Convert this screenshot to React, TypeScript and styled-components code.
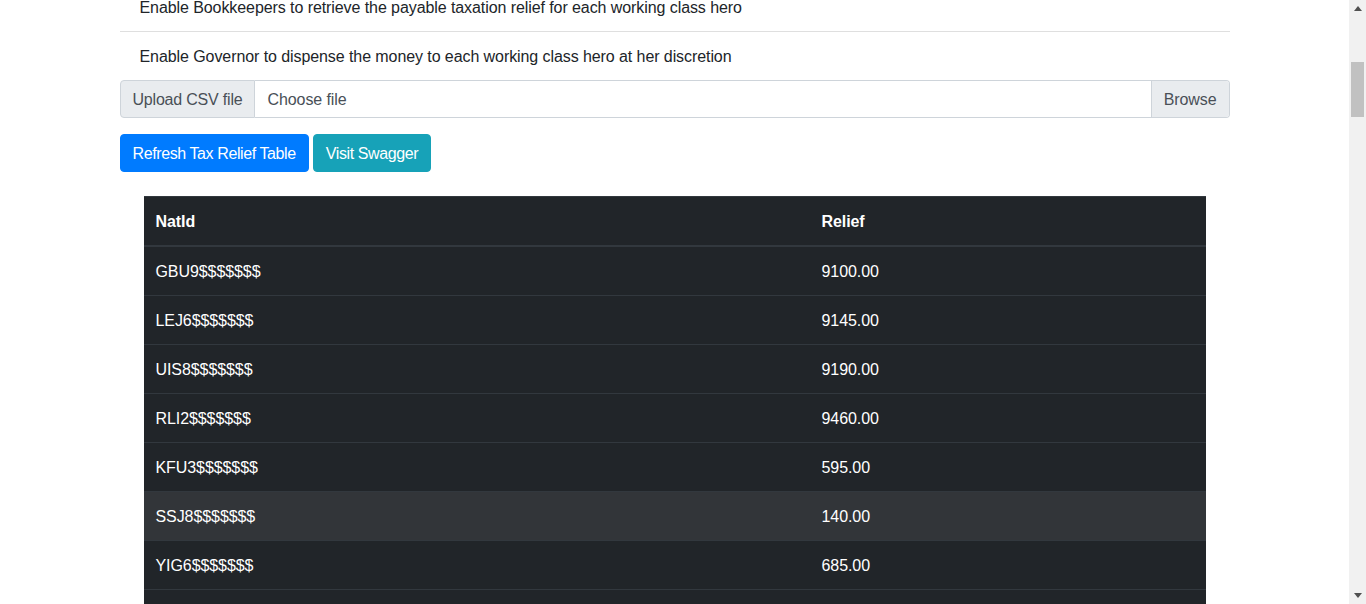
import React from "react";
import styled, { createGlobalStyle } from "styled-components";

const Global = createGlobalStyle`
  html, body { margin: 0; padding: 0; background: #fff; }
  body {
    font-family: "Liberation Sans", Arial, sans-serif;
    font-size: 16px;
    line-height: 1.5;
    letter-spacing: -0.08px;
    color: #212529;
  }
  * { box-sizing: border-box; }
`;

const Viewport = styled.div`
  display: flex;
  width: 1366px;
  height: 604px;
  overflow: hidden;
`;

const Main = styled.main`
  flex: 1;
  overflow: hidden;
`;

const Container = styled.div`
  width: 1110px;
  margin: -17px auto 0;
`;

const ListGroup = styled.ul`
  list-style: none;
  margin: 0;
  padding: 0;
`;

const ListItem = styled.li`
  padding: 13px 20px 11px;
  border-bottom: 1px solid rgba(0, 0, 0, 0.125);
  &:last-child { border-bottom: 0; }
`;

const InputGroup = styled.div`
  display: flex;
  height: 38px;
`;

const Prepend = styled.span`
  display: flex;
  align-items: center;
  padding: 2px 12px 0;
  background: #e9ecef;
  border: 1px solid #ced4da;
  border-radius: 4px 0 0 4px;
  color: #495057;
  white-space: nowrap;
  letter-spacing: -0.2px;
`;

const FileLabel = styled.label`
  flex: 1;
  display: flex;
  align-items: center;
  border: 1px solid #ced4da;
  border-left: 0;
  border-radius: 0 4px 4px 0;
  color: #495057;
  overflow: hidden;
`;

const FileText = styled.span`
  flex: 1;
  padding: 2px 12px 0;
`;

const BrowseBtn = styled.span`
  align-self: stretch;
  display: flex;
  align-items: center;
  padding: 2px 12px 0;
  background: #e9ecef;
  border-left: 1px solid #ced4da;
`;

const ButtonRow = styled.div`
  display: flex;
  gap: 4px;
  margin-top: 16px;
`;

const Button = styled.button<{ $variant: "primary" | "info" }>`
  height: 38px;
  padding: 2px 12px 0;
  border: 1px solid ${(p) => (p.$variant === "primary" ? "#007bff" : "#17a2b8")};
  background: ${(p) => (p.$variant === "primary" ? "#007bff" : "#17a2b8")};
  color: #fff;
  font: inherit;
  letter-spacing: -0.4px;
  border-radius: 4px;
  cursor: pointer;
`;

const TableWrap = styled.div`
  padding: 24px 24px 0;
`;

const Table = styled.table`
  width: 100%;
  border-collapse: collapse;
  background: #212529;
  color: #fff;
`;

const Th = styled.th`
  text-align: left;
  font-weight: 700;
  padding: 13px 12px 11px;
  border-top: 1px solid #32383e;
  border-bottom: 2px solid #32383e;
`;

const Row = styled.tr<{ $hover?: boolean }>`
  background: ${(p) => (p.$hover ? "#323539" : "transparent")};
`;

const Td = styled.td`
  padding: 13px 12px 11px;
  height: 49px;
  border-top: 1px solid #32383e;
`;

const Scrollbar = styled.div`
  width: 17px;
  flex: none;
  background: #f1f1f1;
  display: flex;
  flex-direction: column;
`;

const Arrow = styled.div`
  height: 17px;
  flex: none;
  display: flex;
  align-items: center;
  justify-content: center;
`;

const Track = styled.div`
  flex: 1;
  padding-left: 2px;
`;

const Thumb = styled.div`
  width: 13px;
  height: 55px;
  background: #c1c1c1;
`;

const rows: [string, string][] = [
  ["GBU9$$$$$$$", "9100.00"],
  ["LEJ6$$$$$$$", "9145.00"],
  ["UIS8$$$$$$$", "9190.00"],
  ["RLI2$$$$$$$", "9460.00"],
  ["KFU3$$$$$$$", "595.00"],
  ["SSJ8$$$$$$$", "140.00"],
  ["YIG6$$$$$$$", "685.00"],
  ["", ""],
];

export default function App() {
  return (
    <>
      <Global />
      <Viewport>
        <Main>
          <Container>
            <ListGroup>
              <ListItem>Enable Bookkeepers to retrieve the payable taxation relief for each working class hero</ListItem>
              <ListItem>Enable Governor to dispense the money to each working class hero at her discretion</ListItem>
            </ListGroup>
            <InputGroup>
              <Prepend>Upload CSV file</Prepend>
              <FileLabel>
                <FileText>Choose file</FileText>
                <BrowseBtn>Browse</BrowseBtn>
              </FileLabel>
            </InputGroup>
            <ButtonRow>
              <Button $variant="primary">Refresh Tax Relief Table</Button>
              <Button $variant="info">Visit Swagger</Button>
            </ButtonRow>
            <TableWrap>
              <Table>
                <thead>
                  <tr>
                    <Th style={{ width: 666 }}>NatId</Th>
                    <Th>Relief</Th>
                  </tr>
                </thead>
                <tbody>
                  {rows.map(([id, relief], i) => (
                    <Row key={i} $hover={i === 5}>
                      <Td>{id}</Td>
                      <Td>{relief}</Td>
                    </Row>
                  ))}
                </tbody>
              </Table>
            </TableWrap>
          </Container>
        </Main>
        <Scrollbar>
          <Arrow>
            <svg width="8" height="5" viewBox="0 0 8 5"><path d="M0 5 L4 0 L8 5 Z" fill="#505050" /></svg>
          </Arrow>
          <Track>
            <Thumb style={{ marginTop: 45 }} />
          </Track>
          <Arrow>
            <svg width="8" height="5" viewBox="0 0 8 5"><path d="M0 0 L8 0 L4 5 Z" fill="#505050" /></svg>
          </Arrow>
        </Scrollbar>
      </Viewport>
    </>
  );
}
